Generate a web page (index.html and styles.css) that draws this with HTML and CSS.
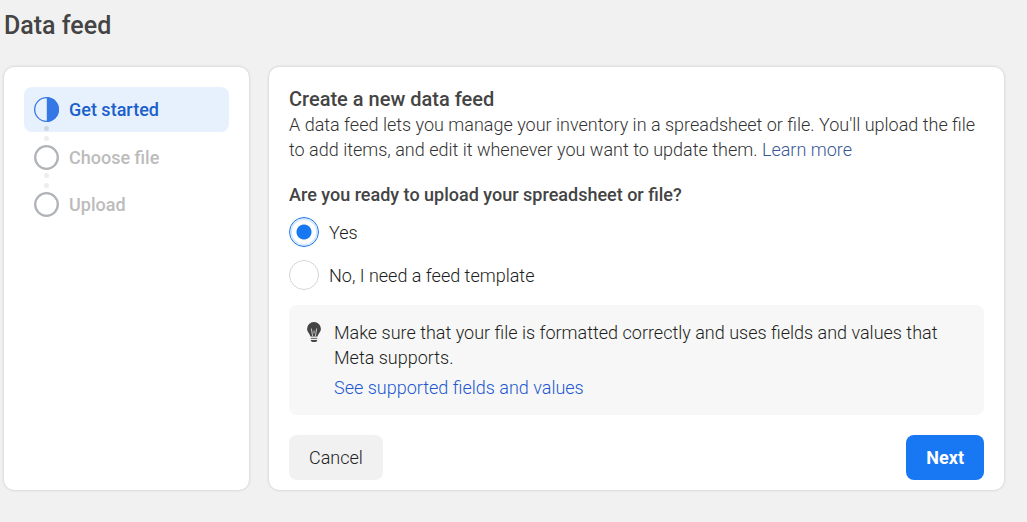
FILE: index.html
```html
<!DOCTYPE html>
<html lang="en">
<head>
<meta charset="utf-8">
<meta name="viewport" content="width=device-width, initial-scale=1">
<title>Data feed</title>
<link rel="stylesheet" href="styles.css">
</head>
<body>
<div class="page">
  <h1 class="page-title">Data feed</h1>
  <div class="layout">
    <nav class="card steps" aria-label="Progress">
      <ol class="step-list">
        <li class="step step-active" aria-current="step">
          <svg class="step-icon" viewBox="0 0 25 25" aria-hidden="true"><circle cx="12.5" cy="12.5" r="11.8" fill="none" stroke="#3578e5" stroke-width="1.3"/><path d="M12.8 .2a12.3 12.3 0 0 1 0 24.6z" fill="#3578e5"/></svg>
          <span>Get started</span>
        </li>
        <li class="step">
          <svg class="step-icon" viewBox="0 0 25 25" aria-hidden="true"><circle cx="12.5" cy="12.5" r="11.3" fill="none" stroke="#b0b3b8" stroke-width="2.3"/></svg>
          <span>Choose file</span>
        </li>
        <li class="step">
          <svg class="step-icon" viewBox="0 0 25 25" aria-hidden="true"><circle cx="12.5" cy="12.5" r="11.3" fill="none" stroke="#b0b3b8" stroke-width="2.3"/></svg>
          <span>Upload</span>
        </li>
      </ol>
    </nav>
    <main class="card">
      <form class="form">
        <h2 class="heading">Create a new data feed</h2>
        <p class="intro">A data feed lets you manage your inventory in a spreadsheet or file. You'll upload the file to add items, and edit it whenever you want to update them. <a class="learn" href="#">Learn more</a></p>
        <fieldset class="question">
          <legend class="legend">Are you ready to upload your spreadsheet or file?</legend>
          <div class="options">
            <label class="option"><input class="radio" type="radio" name="ready" value="yes" checked>Yes</label>
            <label class="option"><input class="radio" type="radio" name="ready" value="no">No, I need a feed template</label>
          </div>
        </fieldset>
        <aside class="tip">
          <svg class="bulb" viewBox="0 0 20 25" aria-hidden="true">
            <path d="M10 2a6.8 6.8 0 0 0-6.9 6.8c0 3.4 2.6 4.6 3.3 7.6h7.2c.7-3 3.3-4.2 3.3-7.6A6.8 6.8 0 0 0 10 2z" fill="#444"/>
            <path d="M7.300 8.500l1.300 7.500M12.700 8.500l-1.300 7.500M10 10.500v3" fill="none" stroke="#c8c8c8" stroke-width="1"/>
            <path d="M6.7 17.8h6.6v1.300H6.700z" fill="#777"/>
            <path d="M6.700 20h6.600c-.2 1.300-1 2-2 2H8.700c-1 0-1.800-.7-2-2z" fill="#444"/>
          </svg>
          <div>
            <p class="tip-text">Make sure that your file is formatted correctly and uses fields and values that Meta supports.</p>
            <a class="tip-link" href="#">See supported fields and values</a>
          </div>
        </aside>
        <div class="actions">
          <button class="button" type="button">Cancel</button>
          <button class="button button-primary" type="button">Next</button>
        </div>
      </form>
    </main>
  </div>
</div>
</body>
</html>
```
FILE: styles.css
```css
* {
  box-sizing: border-box;
}

body {
  margin: 0;
  background: #f1f1f1;
  color: #1c1e21;
  font-family: Roboto, "Liberation Sans", sans-serif;
  font-size: 18px;
  font-weight: 300;
  line-height: 25px;
}

h1, h2, p, ol, fieldset {
  margin: 0;
  padding: 0;
}

a {
  text-decoration: none;
}

.page {
  padding: 11px 23px 32px 4px;
}

.page-title {
  margin-bottom: 26px;
  color: #444;
  font-size: 25px;
  font-weight: 500;
  line-height: 30px;
}

.layout {
  display: grid;
  grid-template-columns: 245px 1fr;
  gap: 20px;
}

.card {
  padding: 20px;
  border-radius: 10px;
  background: #fff;
  box-shadow: 0 0 3px rgba(0, 0, 0, 0.2);
}

.step-list {
  display: flex;
  flex-direction: column;
  gap: 2px;
  list-style: none;
}

.step {
  position: relative;
  display: flex;
  align-items: center;
  gap: 10px;
  height: 45px;
  padding: 0 10px;
  border-radius: 8px;
  color: #bcbcbc;
  font-weight: 500;
}

.step-active {
  margin-bottom: 1px;
  background: #e7f1fd;
  color: #1b5fcc;
}

.step-icon {
  flex: none;
  width: 25px;
  height: 25px;
}

.step:not(:last-child)::before,
.step:not(:last-child)::after {
  content: "";
  position: absolute;
  z-index: 1;
  top: 38px;
  left: 20px;
  width: 5px;
  height: 5px;
  border-radius: 50%;
  background: #ededee;
}

.step:not(:last-child)::after {
  top: 48px;
}

.step-active:not(:last-child)::before {
  top: 39px;
  background: #ccd6e3;
}

.step-active:not(:last-child)::after {
  top: 49px;
}

.heading {
  color: #444;
  font-size: 20px;
  font-weight: 500;
  line-height: 25px;
}

.intro {
  color: #333;
}

.learn {
  color: #385898;
}

.question {
  margin-top: 20px;
  border: 0;
}

.legend {
  padding: 0;
  color: #444;
  font-weight: 500;
}

.options {
  display: grid;
  gap: 13px;
  padding-top: 10px;
}

.option {
  display: flex;
  align-items: center;
  gap: 10px;
}

.radio {
  appearance: none;
  width: 30px;
  height: 30px;
  margin: 0;
  border: 1px solid #d6d6d6;
  border-radius: 50%;
  background: #fff;
}

.radio:checked {
  border-color: #1877f2;
  background: radial-gradient(circle, #1877f2 7px, #fff 8px);
  box-shadow: inset 0 0 0 2px #dbe9fc;
}

.tip {
  display: flex;
  gap: 10px;
  margin-top: 15px;
  padding: 15px;
  border-radius: 8px;
  background: #f7f7f7;
}

.bulb {
  flex: none;
  width: 20px;
  height: 25px;
}

.tip-link {
  display: inline-block;
  margin-top: 5px;
  color: #2157cf;
}

.actions {
  display: flex;
  justify-content: space-between;
  margin: 20px 0 -10px;
}

.button {
  height: 45px;
  padding: 0 20px;
  border: 0;
  border-radius: 8px;
  background: #f1f1f1;
  color: #222;
  font: inherit;
}

.button-primary {
  background: #1877f2;
  color: #fff;
  font-weight: 700;
}
```
